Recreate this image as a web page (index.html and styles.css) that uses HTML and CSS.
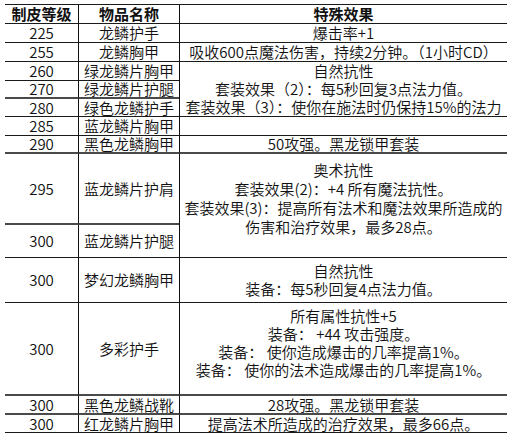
FILE: index.html
```html
<!DOCTYPE html>
<html lang="zh-CN">
<head>
<meta charset="utf-8">
<title>制皮</title>
<link rel="stylesheet" href="styles.css">
</head>
<body>
<div class="sheet">
  <div class="c c1 h">制皮等级</div>
  <div class="c c2 h">物品名称</div>
  <div class="c c3 h">特殊效果</div>

  <div class="c c1">225</div>
  <div class="c c2">龙鳞护手</div>
  <div class="c c3">爆击率+1</div>

  <div class="c c1">255</div>
  <div class="c c2">龙鳞胸甲</div>
  <div class="c c3">吸收600点魔法伤害，持续2分钟。（1小时CD）</div>

  <div class="c c1">260</div>
  <div class="c c2">绿龙鳞片胸甲</div>
  <div class="c c3 span3">
    <span>自然抗性</span>
    <span>套装效果（2）：每5秒回复3点法力值。</span>
    <span>套装效果（3）：使你在施法时仍保持15%的法力</span>
  </div>

  <div class="c c1 thick">270</div>
  <div class="c c2 thick">绿龙鳞片护腿</div>

  <div class="c c1">280</div>
  <div class="c c2">绿色龙鳞护手</div>

  <div class="c c1">285</div>
  <div class="c c2">蓝龙鳞片胸甲</div>
  <div class="c c3"></div>

  <div class="c c1 thick">290</div>
  <div class="c c2 thick">黑色龙鳞胸甲</div>
  <div class="c c3 thick">50攻强。黑龙锁甲套装</div>

  <div class="c c1 thick">295</div>
  <div class="c c2 thick">蓝龙鳞片护肩</div>
  <div class="c c3 span2 up16">
    <span>奥术抗性</span>
    <span>套装效果(2)：+4 所有魔法抗性。</span>
    <span>套装效果(3)：提高所有法术和魔法效果所造成的</span>
    <span>伤害和治疗效果，最多28点。</span>
  </div>

  <div class="c c1">300</div>
  <div class="c c2">蓝龙鳞片护腿</div>

  <div class="c c1">300</div>
  <div class="c c2">梦幻龙鳞胸甲</div>
  <div class="c c3">
    <span>自然抗性</span>
    <span>装备：每5秒回复4点法力值。</span>
  </div>

  <div class="c c1 thick">300</div>
  <div class="c c2 thick">多彩护手</div>
  <div class="c c3 thick up12">
    <span>所有属性抗性+5</span>
    <span>装备： +44 攻击强度。</span>
    <span>装备： 使你造成爆击的几率提高1%。</span>
    <span>装备： 使你的法术造成爆击的几率提高1%。</span>
  </div>

  <div class="c c1 thick">300</div>
  <div class="c c2 thick">黑色龙鳞战靴</div>
  <div class="c c3 thick">28攻强。黑龙锁甲套装</div>

  <div class="c c1">300</div>
  <div class="c c2">红龙鳞片胸甲</div>
  <div class="c c3">提高法术所造成的治疗效果，最多66点。</div>
</div>
</body>
</html>
```

FILE: styles.css
```css
html, body {
  margin: 0;
  padding: 0;
  background: #ffffff;
}

body {
  font-family: "Noto Sans CJK SC", "Liberation Sans", sans-serif;
  font-size: 15px;
  font-weight: 350;
  color: #111111;
}

.sheet {
  display: grid;
  grid-template-columns: 73px 101px 328px;
  grid-template-rows: 19px 19px 19px 19px 18px 18px 19px 18px 71px 33px 45px 93px 19px 18px;
  width: 502px;
  margin: 4px 0 0 5px;
  border-top: 1px solid #1a1a1a;
}

.c {
  box-sizing: border-box;
  display: flex;
  flex-direction: column;
  align-items: center;
  justify-content: center;
  text-align: center;
  white-space: nowrap;
  line-height: 18px;
  border-bottom: 1px solid #1a1a1a;
}

.c1 { grid-column: 1; }
.c2 { grid-column: 2; border-left: 1px solid #111111; }
.c3 { grid-column: 3; border-left: 1px solid #111111; }

.h { font-weight: 700; }

.thick { border-bottom: 2px solid #4a4a4a; }

.span3 { grid-row: span 3; }
.span2 { grid-row: span 2; }

.up16 { padding-bottom: 16px; line-height: 19px; }
.up12 { padding-bottom: 12px; }
```
